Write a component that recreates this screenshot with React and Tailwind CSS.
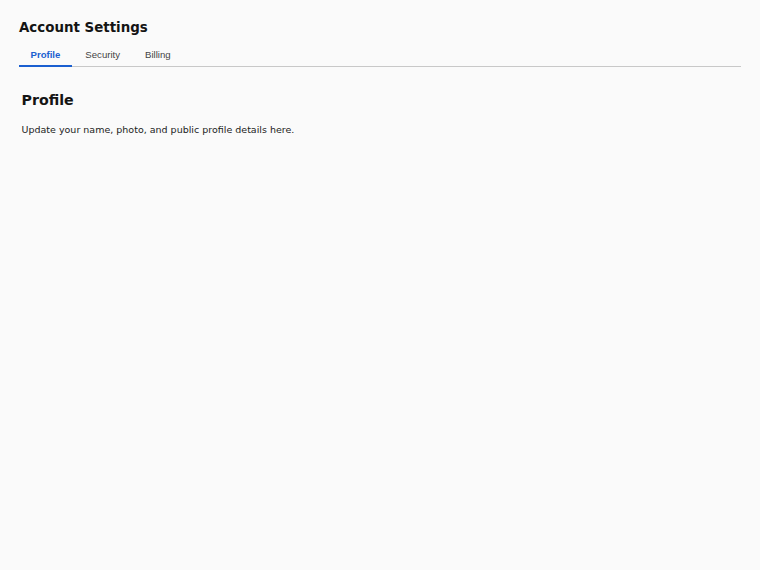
import { useState } from "react";

const tabs = ["Profile", "Security", "Billing"];

export default function App() {
  const [active, setActive] = useState("Profile");

  return (
    <div className="min-h-screen w-full bg-[#fafafa] px-[19px] pt-[20px] font-['DejaVu_Sans',sans-serif] text-[#141414]">
      <h1 className="text-[13.4px] font-bold leading-[16px]">Account Settings</h1>
      <div className="mt-[8px] flex gap-[2px] border-b border-[#c8c8c8]">
        {tabs.map((t) => (
          <button
            key={t}
            onClick={() => setActive(t)}
            className={
              t === active
                ? "-mb-px border-b-2 border-[#1a5fd0] px-[11.5px] py-[5px] font-['Liberation_Sans',sans-serif] text-[9.6px] leading-[11px] font-bold text-[#1a5fd0]"
                : "-mb-px border-b-2 border-transparent px-[11.5px] py-[5px] font-['Liberation_Sans',sans-serif] text-[9.6px] leading-[11px] text-[#444444]"
            }
          >
            {t}
          </button>
        ))}
      </div>
      <div className="px-[2.5px] pt-[24px]">
        <h2 className="text-[14.2px] font-bold leading-[18px]">Profile</h2>
        <p className="mt-[15px] text-[9.5px] leading-[12px] text-[#222222]">
          Update your name, photo, and public profile details here.
        </p>
      </div>
    </div>
  );
}
